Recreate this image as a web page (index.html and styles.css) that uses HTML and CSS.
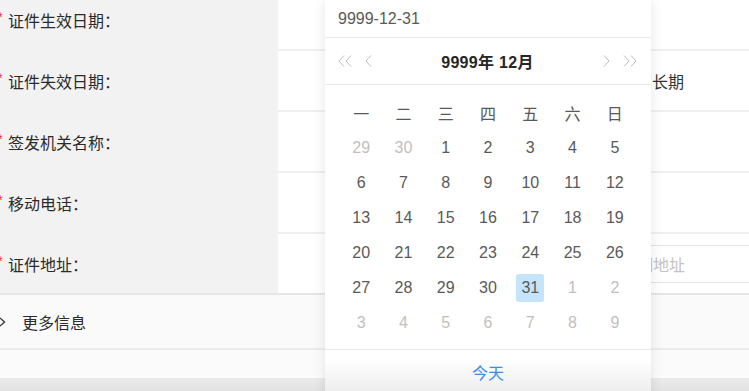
FILE: index.html
```html
<!DOCTYPE html>
<html lang="zh-CN">
<head>
  <meta charset="UTF-8">
  <meta name="viewport" content="width=device-width, initial-scale=1.0">
  <title>证件信息</title>
  <link rel="stylesheet" href="styles.css">
</head>
<body>
  <div class="form">
    <div class="row">
      <div class="label"><i>*</i>证件生效日期：</div>
      <div class="value"></div>
    </div>
    <div class="row">
      <div class="label"><i>*</i>证件失效日期：</div>
      <div class="value">
        <span class="date-box"></span>
        <span class="check"></span>
        <span class="long">长期</span>
      </div>
    </div>
    <div class="row">
      <div class="label"><i>*</i>签发机关名称：</div>
      <div class="value"></div>
    </div>
    <div class="row">
      <div class="label"><i>*</i>移动电话：</div>
      <div class="value"></div>
    </div>
    <div class="row last">
      <div class="label"><i>*</i>证件地址：</div>
      <div class="value">
        <span class="region-box"></span>
        <span class="text-box">请输入详细地址</span>
      </div>
    </div>
  </div>

  <div class="more">
    <svg class="arrow" width="7" height="10" viewBox="0 0 7 10"><polyline points="1,1 5.5,5 1,9" fill="none" stroke="#333" stroke-width="1.3"/></svg>
    更多信息
  </div>
  <div class="filler"></div>
  <div class="bottom-bar"></div>

  <!-- date picker dropdown -->
  <div class="picker">
    <div class="picker-input">9999-12-31</div>
    <div class="picker-head">
      <div class="nav">
        <svg width="14" height="12" viewBox="0 0 14 12"><polyline points="6,0.5 1,6 6,11.5" /><polyline points="13,0.5 8,6 13,11.5" /></svg>
        <svg width="7" height="12" viewBox="0 0 7 12"><polyline points="6,0.5 1,6 6,11.5" /></svg>
      </div>
      <div class="title">9999年 12月</div>
      <div class="nav">
        <svg width="7" height="12" viewBox="0 0 7 12"><polyline points="1,0.5 6,6 1,11.5" /></svg>
        <svg width="14" height="12" viewBox="0 0 14 12"><polyline points="1,0.5 6,6 1,11.5" /><polyline points="8,0.5 13,6 8,11.5" /></svg>
      </div>
    </div>
    <div class="picker-body">
      <div class="week">一</div><div class="week">二</div><div class="week">三</div><div class="week">四</div><div class="week">五</div><div class="week">六</div><div class="week">日</div>

      <div class="day off">29</div><div class="day off">30</div><div class="day">1</div><div class="day">2</div><div class="day">3</div><div class="day">4</div><div class="day">5</div>
      <div class="day">6</div><div class="day">7</div><div class="day">8</div><div class="day">9</div><div class="day">10</div><div class="day">11</div><div class="day">12</div>
      <div class="day">13</div><div class="day">14</div><div class="day">15</div><div class="day">16</div><div class="day">17</div><div class="day">18</div><div class="day">19</div>
      <div class="day">20</div><div class="day">21</div><div class="day">22</div><div class="day">23</div><div class="day">24</div><div class="day">25</div><div class="day">26</div>
      <div class="day">27</div><div class="day">28</div><div class="day">29</div><div class="day">30</div><div class="day selected"><span>31</span></div><div class="day off">1</div><div class="day off">2</div>
      <div class="day off">3</div><div class="day off">4</div><div class="day off">5</div><div class="day off">6</div><div class="day off">7</div><div class="day off">8</div><div class="day off">9</div>
    </div>
    <div class="picker-foot">今天</div>
  </div>
</body>
</html>
```

FILE: styles.css
```css
body {
  margin: 0;
  font-family: "Liberation Sans", "Noto Sans CJK SC", sans-serif;
  font-size: 16px;
  color: #333;
  background-color: #fff;
  height: 391px;
  overflow: hidden;
  position: relative;
}

.form {
  margin-top: -10px;
}

.row {
  display: flex;
  height: 61px;
}

.row.last {
  height: 59px;
}

.label {
  width: 278px;
  flex: none;
  background-color: #f2f2f2;
  display: flex;
  align-items: center;
  padding-bottom: 2px;
  box-sizing: border-box;
  color: #2b2b2b;
}

.row.last .label {
  padding-bottom: 0;
}

.label i {
  font-style: normal;
  color: #f5222d;
  display: inline-block;
  width: 11px;
  margin-left: -3px;
  font-size: 15px;
  align-self: flex-start;
  margin-top: 18px;
}

.value {
  flex: 1;
  display: flex;
  align-items: center;
  padding-left: 47px;
  border-bottom: 2px solid #efefef;
}

.row.last .value {
  border-bottom: none;
}

.date-box {
  width: 300px;
  height: 36px;
}

.check {
  width: 14px;
  height: 14px;
  margin-left: 8px;
  border: 1px solid #d9d9d9;
  box-sizing: border-box;
}

.long {
  margin-left: 5px;
  color: #333;
}

.region-box {
  width: 235px;
  height: 38px;
}

.text-box {
  flex: 1;
  height: 38px;
  margin-left: 6px;
  margin-right: -2px;
  padding-left: 6px;
  border: 1px solid #e4e4e8;
  box-sizing: border-box;
  display: flex;
  align-items: center;
  color: #c4c4c4;
}

.more {
  height: 57px;
  box-sizing: border-box;
  border-top: 2px solid #e6e6e6;
  border-bottom: 2px solid #ebebeb;
  background-color: #fafafa;
  display: flex;
  align-items: center;
  color: #2b2b2b;
}

.arrow {
  margin-left: -1px;
  margin-right: 16px;
}

.filler {
  height: 28px;
  background-color: #fbfbfb;
}

.bottom-bar {
  height: 13px;
  background: linear-gradient(#ebebeb, #e2e2e2);
}

/* Date picker */
.picker {
  position: absolute;
  left: 325px;
  top: 0;
  width: 326px;
  height: 400px;
  background-color: #fff;
  box-shadow: 0 0 12px rgba(0, 0, 0, 0.1);
  color: #595959;
}

.picker-input {
  height: 37px;
  border-bottom: 1px solid #e9e9e9;
  padding-left: 13px;
  display: flex;
  align-items: center;
}

.picker-head {
  height: 46px;
  border-bottom: 1px solid #e9e9e9;
  display: flex;
  align-items: center;
  padding: 0 14px 0 13px;
}

.nav {
  display: flex;
  align-items: center;
  gap: 13px;
}

.nav svg {
  fill: none;
  stroke: #bdbdbd;
  stroke-width: 1;
}

.title {
  flex: 1;
  text-align: center;
  font-weight: bold;
  color: #262626;
  letter-spacing: 0.3px;
}

.picker-body {
  display: grid;
  grid-template-columns: repeat(7, 1fr);
  grid-auto-rows: 35px;
  padding: 10px 15px 9px;
}

.week, .day {
  display: flex;
  align-items: center;
  justify-content: center;
}

.day.off {
  color: #bfbfbf;
}

.day.selected span {
  width: 28px;
  height: 28px;
  border-radius: 3px;
  background-color: #c4e4fb;
  display: flex;
  align-items: center;
  justify-content: center;
}

.picker-foot {
  height: 44px;
  border-top: 1px solid #e9e9e9;
  display: flex;
  align-items: center;
  justify-content: center;
  color: #3a8ee6;
  background: linear-gradient(#fff 20%, #ececec 100%);
}
```
